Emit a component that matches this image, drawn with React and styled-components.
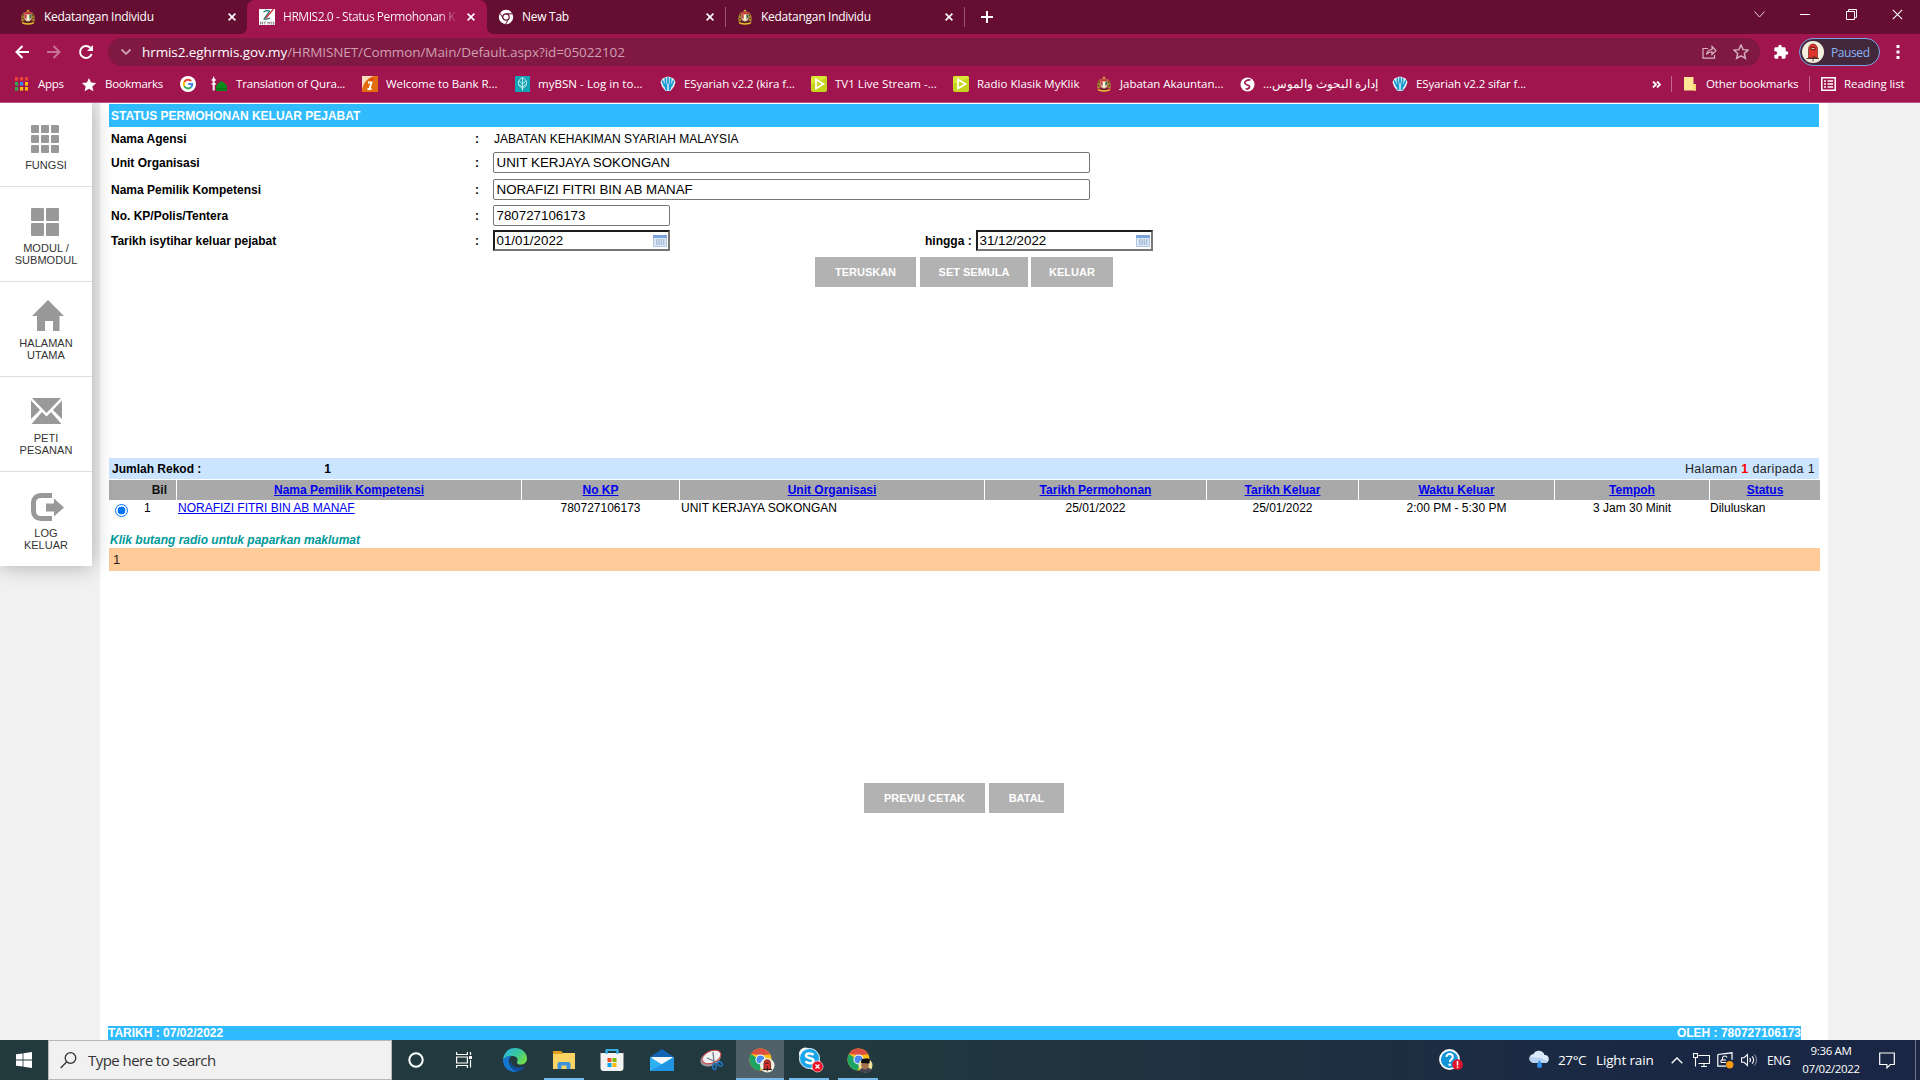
import React from "react";
import styled, { createGlobalStyle } from "styled-components";

const UI = `"Segoe UI", "Open Sans", "Noto Sans", sans-serif`;
const ARIAL = `Arial, "Liberation Sans", sans-serif`;

const Global = createGlobalStyle`
  html, body { margin: 0; padding: 0; overflow: hidden; background: #f1f1f1; }
  *, *::before, *::after { box-sizing: border-box; }
  svg { display: block; flex: none; }
`;

/* ---------- window ---------- */
const Screen = styled.div`
  width: 1920px;
  height: 1080px;
  display: flex;
  flex-direction: column;
  overflow: hidden;
  font-family: ${ARIAL};
`;

/* ---------- browser chrome ---------- */
const TabStrip = styled.div`
  height: 34px;
  flex: none;
  display: flex;
  background: #650e31;
  font-family: ${UI};
`;
const Tab = styled.div`
  width: ${(p) => p.$w}px;
  height: 34px;
  position: relative;
  display: flex;
  align-items: center;
  padding: 0 ${(p) => p.$pr}px 0 ${(p) => p.$pad}px;
  color: #fff;
  font-size: 12px;
  background: ${(p) => (p.$active ? "#a1154f" : "transparent")};
  border-radius: 8px 8px 0 0;
  ${(p) =>
    p.$active &&
    `
    &::before, &::after {
      content: "";
      position: absolute;
      bottom: 0;
      width: 6px;
      height: 6px;
    }
    &::before { left: -6px; background: radial-gradient(circle at 0 0, transparent 5.500px, #a1154f 6px); }
    &::after { right: -6px; background: radial-gradient(circle at 100% 0, transparent 5.500px, #a1154f 6px); }
  `}
`;
const TabTitle = styled.span`
  flex: 1;
  margin-left: 8px;
  line-height: 18px;
  white-space: nowrap;
  letter-spacing: ${(p) => p.$ls}px;
  ${(p) =>
    p.$fade &&
    "background: linear-gradient(90deg, #fff 90%, #b04a76 98%); -webkit-background-clip: text; background-clip: text; color: transparent;"}
`;
const TabClose = styled.span`
  width: 28px;
  flex: none;
  display: flex;
  justify-content: center;
`;
const TabDivider = styled.i`
  width: 1px;
  height: 20px;
  margin-top: 7px;
  background: #96576f;
`;
const NewTab = styled.div`
  width: 44px;
  display: flex;
  align-items: center;
  justify-content: center;
`;
const WindowButtons = styled.div`
  margin-left: auto;
  display: flex;
  height: 28px;
`;
const WinButton = styled.div`
  width: 46px;
  display: flex;
  align-items: center;
  justify-content: center;
`;

const Toolbar = styled.div`
  height: 36px;
  flex: none;
  display: flex;
  align-items: center;
  background: #a1154f;
  font-family: ${UI};
`;
const NavButton = styled.div`
  width: 32px;
  display: flex;
  justify-content: center;
  &:first-child { margin-left: 6px; }
`;
const Omnibox = styled.div`
  width: 1652px;
  height: 28px;
  margin-left: 6px;
  padding: 0 11px 0 12px;
  border-radius: 14px;
  background: #7f1942;
  display: flex;
  align-items: center;
`;
const Url = styled.span`
  flex: 1;
  margin-left: 10px;
  font-size: 13.5px;
  line-height: 20px;
  letter-spacing: -0.085px;
  color: #cf9fb2;
  b { font-weight: 400; color: #fff; }
`;
const OmniAction = styled.div`
  margin-left: ${(p) => p.$ml || 16}px;
`;
const ProfilePill = styled.div`
  width: 81px;
  height: 28px;
  margin-left: 10px;
  padding-left: 2px;
  border: 1px solid #7aa3e8;
  border-radius: 14px;
  background: #43283b;
  display: flex;
  align-items: center;
  color: #8ab4f8;
  font-size: 12px;
  span { margin-left: 7px; letter-spacing: -0.4px; }
`;

const BookmarkBar = styled.div`
  height: 33px;
  flex: none;
  display: flex;
  align-items: center;
  padding-bottom: 4px;
  background: #a1154f;
  border-bottom: 1px solid #b95580;
  color: #fff;
  font-family: ${UI};
  font-size: 11.5px;
`;
const Bookmark = styled.div`
  width: ${(p) => p.$w}px;
  height: 20px;
  display: flex;
  align-items: center;
  span {
    margin-left: ${(p) => p.$gap || 8}px;
    line-height: 18px;
    white-space: nowrap;
    letter-spacing: ${(p) => p.$ls ?? -0.3}px;
  }
`;
const BarDivider = styled.i`
  width: 1px;
  height: 16px;
  background: #c66790;
`;

/* ---------- page ---------- */
const Page = styled.div`
  height: 937px;
  flex: none;
  display: flex;
  background: #f1f1f1;
  overflow: hidden;
`;
const Side = styled.nav`
  width: 92px;
  height: 463px;
  flex: none;
  position: relative;
  z-index: 1;
  background: #fff;
  box-shadow: 0 0 20px rgba(0, 0, 0, 0.3);
`;
const SideItem = styled.div`
  height: ${(p) => p.$h}px;
  padding-top: ${(p) => p.$top}px;
  border-bottom: 1px solid ${(p) => (p.$last ? "#fff" : "#dedede")};
  display: flex;
  flex-direction: column;
  align-items: center;
  font-size: 11px;
  line-height: 12px;
  text-align: center;
  color: #333;
  svg { margin-left: ${(p) => p.$shift || 0}px; }
  span { margin-top: ${(p) => p.$gap}px; white-space: pre; letter-spacing: 0.03px; }
`;
const Panel = styled.main`
  width: 1728px;
  margin-left: 8px;
  padding: 1px 8px 0 9px;
  background: #fff;
  display: flex;
  flex-direction: column;
  font-size: 12px;
  color: #000;
`;
const TitleBar = styled.h1`
  width: 1710px;
  height: 23px;
  margin: 0;
  padding-left: 2px;
  background: #2fbbfe;
  color: #fff;
  font-size: 12px;
  font-weight: 700;
  line-height: 25px;
`;
const Field = styled.div`
  height: ${(p) => p.$h}px;
  display: flex;
  align-items: center;
  padding-left: 2px;
`;
const Label = styled.label`
  width: 364px;
  font-weight: 700;
`;
const Colon = styled.span`
  width: 18px;
  padding-right: 1px;
  font-weight: 700;
`;
const Plain = styled.span`
  margin-left: 1px;
  letter-spacing: 0.02px;
`;
const Box = styled.div`
  width: ${(p) => p.$w}px;
  height: 21px;
  padding: 0 2.5px;
  border: 1px solid #767676;
  border-radius: 2px;
  background: #fff;
  font-size: 13.33px;
  line-height: 20px;
`;
const DateBox = styled(Box)`
  display: flex;
  align-items: center;
  justify-content: space-between;
  padding: 0 1.5px;
  border: 2px solid;
  border-color: #1d1d1d #767676 #767676 #1d1d1d;
  border-radius: 0;
  line-height: 17px;
`;
const Until = styled.span`
  width: 51px;
  margin-left: 255px;
  font-weight: 700;
`;
const Actions = styled.div`
  display: flex;
  margin-left: ${(p) => p.$left}px;
  margin-top: ${(p) => p.$top}px;
`;
const Button = styled.button`
  width: ${(p) => p.$w}px;
  height: 30px;
  margin: 0 ${(p) => p.$mr || 0}px 0 0;
  padding: 0;
  border: 0;
  background: #b2b2b2;
  color: #fff;
  font: 700 11px/30px ${ARIAL};
`;
const Summary = styled.div`
  width: 1710px;
  height: 21px;
  margin-top: 171px;
  padding: 0 4px 0 3px;
  background: #cbe4ff;
  display: flex;
  align-items: center;
  font-size: 12px;
  b.count { margin-left: 123px; }
  b.page { color: #f00; }
`;
const PageInfo = styled.span`
  margin-left: auto;
  font-size: 12.5px;
  letter-spacing: 0.35px;
  color: #222;
`;
const Grid = styled.div`
  display: grid;
  grid-template-columns: 67px 344px 157px 304px 221px 151px 195px 154px 110px;
  column-gap: 1px;
`;
const HeadRow = styled(Grid)`
  margin-top: 1px;
`;
const Th = styled.div`
  height: 20px;
  background: #a9a9a9;
  text-align: center;
  font-weight: 700;
  line-height: 20px;
  color: ${(p) => (p.$plain ? "#111" : "#00e")};
  ${(p) => (p.$plain ? "text-align: right; padding-right: 9px;" : "text-decoration: underline;")}
`;
const Td = styled.div`
  height: 32px;
  padding: 1px 1px 0;
  line-height: 15px;
  text-align: ${(p) => (p.$left ? "left" : "center")};
  a { color: #00e; text-decoration: underline; }
`;
const StatusCell = styled(Td)`
  padding-left: 0;
  text-align: left;
`;
const IndexCell = styled(Td)`
  display: flex;
  padding-left: 6px;
  span { margin-left: 16px; }
`;
const Radio = styled.i`
  width: 13px;
  height: 13px;
  margin-top: 3px;
  border: 1px solid #0075ff;
  border-radius: 50%;
  background: radial-gradient(circle, #0075ff 0 3.6px, #fff 4.2px);
`;
const Hint = styled.div`
  height: 16px;
  padding-left: 1px;
  color: #009999;
  font-weight: 700;
  font-style: italic;
  line-height: 17px;
`;
const Pager = styled.div`
  height: 23px;
  padding-left: 4px;
  background: #ffcb99;
  color: #222;
  font-size: 13px;
  line-height: 23px;
`;
const PageFooter = styled.div`
  width: 1693px;
  height: 14px;
  margin: auto 0 0 -1px;
  background: #2fbbfe;
  color: #fff;
  font-weight: 700;
  line-height: 14px;
  display: flex;
  justify-content: space-between;
`;

/* ---------- taskbar ---------- */
const Taskbar = styled.div`
  height: 40px;
  flex: none;
  display: flex;
  background: linear-gradient(90deg, #22393e 0%, #22393f 45%, #1f3140 65%, #1a2844 85%, #1a2643 100%);
  color: #fff;
  font-family: ${UI};
`;
const Start = styled.div`
  width: 48px;
  display: flex;
  align-items: center;
  justify-content: center;
`;
const Search = styled.div`
  width: 344px;
  height: 40px;
  padding-left: 11px;
  border: 1px solid #b9b9b9;
  background: #f1f1f1;
  color: #333;
  display: flex;
  align-items: center;
  font-size: 15px;
  span { margin-left: 11px; letter-spacing: -0.55px; }
`;
const Task = styled.div`
  width: ${(p) => p.$w || 48}px;
  height: 40px;
  margin-left: ${(p) => p.$ml || 0}px;
  display: flex;
  align-items: center;
  justify-content: center;
  background: ${(p) => (p.$active ? "#50616a" : "transparent")};
  border-bottom: ${(p) => (p.$open ? "2px solid #76b9ed" : "0")};
  padding-top: ${(p) => (p.$open ? 2 : 0)}px;
  padding-left: ${(p) => p.$shift || 0}px;
`;
const Tray = styled.div`
  margin-left: auto;
  display: flex;
  align-items: center;
`;
const TraySlot = styled.div`
  width: ${(p) => p.$w}px;
  display: flex;
  justify-content: center;
`;
const TrayText = styled.div`
  width: ${(p) => p.$w}px;
  font-size: ${(p) => p.$size || 12}px;
  letter-spacing: ${(p) => p.$ls || 0}px;
  white-space: nowrap;
`;
const Clock = styled.div`
  width: 74px;
  font-size: 11.5px;
  line-height: 18px;
  letter-spacing: -0.35px;
  text-align: center;
`;
const ShowDesktop = styled.i`
  width: 5px;
  height: 40px;
  border-left: 1px solid #6b7487;
`;

/* ---------- icons ---------- */
const Crest = () => (
  <svg width="16" height="16" viewBox="0 0 16 16">
    <path d="M6 2.5h4L8 .4z" fill="#e8c32a" />
    <path d="M3.500 3C1.500 6 .8 9 1.500 12.500l3-.5-.5-4zM12.500 3c2 3 2.700 6 2 9.500l-3-.5.5-4z" fill="#a9822c" />
    <path d="M4.300 3.500h7.400v5c0 2-1.700 3.700-3.700 4.500-2-.8-3.700-2.500-3.700-4.500z" fill="#dccba6" />
    <path d="M4.300 3.500h7.400v1.700H4.300z" fill="#d3302f" />
    <path d="M4.800 5.500h1.700v4.500L4.800 8.500z" fill="#c33" />
    <path d="M9.500 5.500h1.700v3L9.500 10z" fill="#2f6f3c" />
    <path d="M7 6h2v5H7z" fill="#fbf6e2" />
    <path d="M1.500 12.500c3 2.300 10 2.300 13 0l-.9 2.200c-3.400 1.500-7.800 1.500-11.200 0z" fill="#e3c229" />
    <path d="M2.500 5l1.500 2M13.500 5L12 7M1.800 9l2 1M14.200 9l-2 1M5 13h6" stroke="#54351b" strokeWidth=".9" />
  </svg>
);
const Hrmis = () => (
  <svg width="16" height="16" viewBox="0 0 16 16">
    <path d="M0 0h16v16H0z" fill="#fff" />
    <path d="M4.500 3C7 1.500 9 1.500 10.500 2L5 10c2 .4 4 .1 6-1" fill="none" stroke="#1c7474" strokeWidth="1.200" />
    <path d="M14.500 0L6.500 9.500" stroke="#d4232c" strokeWidth="1.200" />
    <path d="M1.500 12.500v3M3.700 12.500v3M1.500 14h2.200M5.700 15.500v-2.600h1.500M9 15.500v-2.600l1 1.300 1-1.300v2.600M12.700 12.500v3M15 13h-.8v1h.8v1.300h-1.200" fill="none" stroke="#666" strokeWidth=".7" />
  </svg>
);
const ChromeMono = () => (
  <svg width="16" height="16" viewBox="0 0 16 16">
    <circle cx="8" cy="8" r="7.200" fill="#fff" />
    <circle cx="8" cy="8" r="3.200" fill="none" stroke="#650e31" strokeWidth="1.200" />
    <path d="M8 4.800h6.500M5.200 9.600L2 4.200M10.800 9.600L7.800 15" stroke="#650e31" strokeWidth="1" />
  </svg>
);
const Cross = ({ s = 8, w = 1.6 }) => (
  <svg width={s} height={s} viewBox="0 0 8 8">
    <path d="M.6.6l6.800 6.800M7.400.6L.6 7.400" stroke="#fff" strokeWidth={w} />
  </svg>
);
const Stroke = ({ w, h, d, c = "#fff", sw = 1, fill = "none" }) => (
  <svg width={w} height={h} viewBox={`0 0 ${w} ${h}`}>
    <path d={d} stroke={c} strokeWidth={sw} fill={fill} />
  </svg>
);
const Reload = () => (
  <svg width="16" height="16" viewBox="0 0 16 16">
    <path d="M13.700 10a6 6 0 1 1-1.300-6.200" fill="none" stroke="#fff" strokeWidth="2" />
    <path d="M15 1v6H9z" fill="#fff" />
  </svg>
);
const STAR = "M8 1l2.100 4.600 5 .5-3.800 3.300 1.100 4.900L8 11.800l-4.400 2.500 1.100-4.900L.9 6.100l5-.5z";
const Puzzle = () => (
  <svg width="16" height="16" viewBox="0 0 24 24">
    <path fill="#fff" d="M20.500 11H19V7c0-1.100-.9-2-2-2h-4V3.500a2.500 2.500 0 0 0-5 0V5H4c-1.100 0-2 .9-2 2v3.800h1.500c1.500 0 2.700 1.200 2.700 2.700S5 16.200 3.500 16.200H2V20c0 1.100.9 2 2 2h3.800v-1.500c0-1.500 1.200-2.700 2.700-2.700s2.700 1.200 2.700 2.700V22H17c1.100 0 2-.9 2-2v-4h1.500a2.500 2.500 0 0 0 0-5z" />
  </svg>
);
const Avatar = ({ s = 22 }) => (
  <svg width={s} height={s} viewBox="0 0 22 22">
    <circle cx="11" cy="11" r="11" fill="#f3eedd" />
    <path d="M6.500 17V8a4.500 5 0 0 1 9 0v9z" fill="#e0352d" stroke="#5b1714" strokeWidth=".6" />
    <ellipse cx="11" cy="7.500" rx="2.800" ry="2" fill="#8b1f1c" />
    <path d="M9.500 7.500h3" stroke="#f5e7c4" strokeWidth=".8" />
    <path d="M11 20.500v-5M4.500 17.500H17M12 15l3 3" stroke="#3c2a23" strokeWidth=".9" />
  </svg>
);
const Apps = () => (
  <svg width="13" height="14" viewBox="0 0 13 14">
    {["#ea4335", "#ea4335", "#ea4335", "#34a853", "#4285f4", "#fbbc05", "#34a853", "#fbbc05", "#fbbc05"].map((c, i) => (
      <rect key={i} x={(i % 3) * 5} y={Math.floor(i / 3) * 5} width="3.200" height="3.600" fill={c} />
    ))}
  </svg>
);
const Google = () => (
  <svg width="16" height="16" viewBox="0 0 16 16">
    <circle cx="8" cy="8" r="8" fill="#fff" />
    <g fill="none" strokeWidth="2">
      <path d="M11.200 5A4.300 4.300 0 0 0 4.300 5.900" stroke="#ea4335" />
      <path d="M4.300 5.900a4.300 4.300 0 0 0 0 4.200" stroke="#fbbc05" />
      <path d="M4.300 10.100a4.300 4.300 0 0 0 6.700 1.200" stroke="#34a853" />
      <path d="M11 11.300A4.300 4.300 0 0 0 12.300 8H8.200" stroke="#4285f4" />
    </g>
  </svg>
);
const Mosque = () => (
  <svg width="17" height="16" viewBox="0 0 17 16">
    <path d="M2.700 0l1 2.500v12H1.700v-12z" fill="#f1f1f1" />
    <path d="M.6 4h4.200M.6 8h4.200" stroke="#fff" strokeWidth="1.300" />
    <path d="M5 15v-4c0-2.500 3-4.500 5.500-6C13 6.500 16 8.500 16 11v4z" fill="#0c8a1c" />
    <path d="M5.500 13h10.500" stroke="#064f0d" strokeDasharray="1.500 1" />
  </svg>
);
const InfoI = () => (
  <svg width="16" height="16" viewBox="0 0 16 16">
    <path d="M0 0h16v16H0z" fill="#e36d0e" />
    <path d="M0 0h12C8 1 3 4 .8 11L0 13z" fill="#f7dfc0" />
    <path d="M6 6.500h3.500l-2 6.500M5.500 13h4" fill="none" stroke="#fff" strokeWidth="1.800" />
    <circle cx="10" cy="3.500" r="1.500" fill="#e33a0e" />
  </svg>
);
const Bsn = () => (
  <svg width="15" height="16" viewBox="0 0 15 16">
    <path d="M0 0h15v16H0z" fill="#12a3b4" />
    <path d="M7.500 1.500c5 2 6 8 0 11-6-3-5-9 0-11zM7.500 2v12.500M4 5l3.500 3L11 5M3.800 8.500l3.700 2.500 3.700-2.500" fill="none" stroke="#c9eef2" strokeWidth=".9" />
  </svg>
);
const Hands = () => (
  <svg width="16" height="16" viewBox="0 0 16 16">
    <path d="M5 1.500L8 .5l3 1 2.500 1L15.500 6l-1.500 4.500-3.500 4.500h-5L2 10.500.5 6l2-3.500z" fill="#e6f5fb" />
    <path d="M8 2v5M5.300 3l.5 6M10.700 3l-.5 6M2.500 5l2 5M13.500 5l-2 5" fill="none" stroke="#1d9bd1" strokeWidth="1.800" strokeLinecap="round" />
    <path d="M4 9l3.300-1v6.500H5.700zM12 9L8.700 8v6.500h1.600z" fill="#1d9bd1" />
  </svg>
);
const Klik = () => (
  <svg width="16" height="16" viewBox="0 0 16 16">
    <rect width="16" height="16" rx="2" fill="#c5d51d" />
    <path d="M0 8l16-6V2a2 2 0 0 0-2-2H2a2 2 0 0 0-2 2z" fill="#dbe534" />
    <path d="M5 3.500v9L12.500 8z" fill="none" stroke="#fff" strokeWidth="1.700" />
  </svg>
);
const Globe = () => (
  <svg width="15" height="15" viewBox="0 0 15 15">
    <circle cx="7.500" cy="7.500" r="7" fill="#fff" />
    <path d="M10.500 3C7 2.500 4 4.500 5 6.500s5 1 4.500 3.500-3 2-4 2" fill="none" stroke="#a1154f" strokeWidth="1.600" />
  </svg>
);
const Folder = () => (
  <svg width="12" height="14" viewBox="0 0 12 14">
    <path d="M0 0h9.500v7h2.500v6.500H0z" fill="#ffe594" />
    <path d="M9.500 7h2.500v6.500H9.500z" fill="#f9d873" />
  </svg>
);
const ReadingList = () => (
  <svg width="15" height="14" viewBox="0 0 15 14">
    <path d="M.8.8h13.400v12.400H.8z" fill="none" stroke="#fff" strokeWidth="1.500" />
    <path d="M3 4h2M3 7h2M3 10h2M6.500 4H12M6.500 7H12M6.500 10H12" stroke="#fff" strokeWidth="1.400" />
  </svg>
);
const Squares = ({ n }) => {
  const step = n === 3 ? 10 : 15;
  const size = n === 3 ? 8 : 13;
  return (
    <svg width="28" height="28" viewBox="0 0 28 28">
      {Array.from({ length: n * n }, (_, i) => (
        <rect key={i} x={(i % n) * step} y={Math.floor(i / n) * step} width={size} height={size} rx="1" fill="#999" />
      ))}
    </svg>
  );
};
const House = () => (
  <svg width="32" height="31" viewBox="0 0 32 31">
    <path d="M16 0l16 16h-4.500v15H21V21h-8v10H5V16H0z" fill="#999" />
  </svg>
);
const Envelope = () => (
  <svg width="31" height="26" viewBox="0 0 31 26">
    <path d="M1 0h29L15.500 15zM0 2.500L9 12 0 21zM31 2.500L22 12l9 9zM11 14l4.500 4.500L20 14l10.500 12H.5z" fill="#999" />
  </svg>
);
const Logout = () => (
  <svg width="33" height="28" viewBox="0 0 33 28">
    <path d="M21 2.500H9.500a7 7 0 0 0-7 7v9a7 7 0 0 0 7 7H21" fill="none" stroke="#999" strokeWidth="5" />
    <path d="M15 10.500h8V5.500l10 9-10 9v-5h-8z" fill="#999" />
  </svg>
);
const Calendar = () => (
  <svg width="14" height="12" viewBox="0 0 14 12">
    <path d="M.5.500h13v11H.5z" fill="#dce8f8" stroke="#b5c6e0" />
    <path d="M0 0h14v3H0z" fill="#7ba3dc" />
    <path d="M3 5h9M3 7h9M3 9h9" stroke="#7f95b8" strokeDasharray="1.500 .8" />
  </svg>
);
const Windows = () => (
  <svg width="16" height="16" viewBox="0 0 16 16">
    <path d="M0 2.300L6.600 1.400V7.600H0zM7.400 1.300L16 0V7.600H7.400zM0 8.400h6.600v6.200L0 13.700zM7.400 8.400H16V16l-8.600-1.300z" fill="#fff" />
  </svg>
);
const Magnifier = () => (
  <svg width="17" height="17" viewBox="0 0 17 17">
    <circle cx="10.500" cy="6" r="5.300" fill="none" stroke="#333" strokeWidth="1.300" />
    <path d="M6.800 9.800L.7 16" stroke="#333" strokeWidth="1.300" />
  </svg>
);
const Cortana = () => (
  <svg width="16" height="16" viewBox="0 0 16 16">
    <circle cx="8" cy="8" r="6.700" fill="none" stroke="#fff" strokeWidth="2" />
  </svg>
);
const TaskView = () => (
  <svg width="17" height="16" viewBox="0 0 17 16">
    <path d="M.6 0v2.500h10.800V0M.6 16v-2.500h10.800V16M.6 5h10.800v6H.6zM14.500 0v3M14.500 8v7.500" fill="none" stroke="#fff" strokeWidth="1.200" />
    <path d="M13 4h3v3h-3z" fill="#fff" />
  </svg>
);
const Edge = () => (
  <svg width="24" height="24" viewBox="0 0 24 24">
    <defs>
      <linearGradient id="eg" x1="0" y1="0" x2="1" y2=".6">
        <stop offset="0" stopColor="#2bb5e8" />
        <stop offset=".6" stopColor="#38c99b" />
        <stop offset="1" stopColor="#6fdc4d" />
      </linearGradient>
    </defs>
    <path d="M0 12C1 4 6 0 12 0c7 0 12 5 12 10.500 0 4-3 6-6.500 6-3 0-4-1.500-3.300-3 1.500-3-1.200-5.500-4.700-5.500C5 8 1.500 10 0 12z" fill="url(#eg)" />
    <path d="M0 12c1.500-3 5-4.600 8.500-4.300C6 9.500 5.500 12 6 15c.8 4.500 5 7.500 9 8.500C7 25.500 0 20 0 12z" fill="#1477cf" />
    <path d="M8.500 12c-1 6 4.500 9.500 13 6.500-2 3.300-4.500 4.700-7 5C9 22.500 5.500 17 8.500 12z" fill="#0d4f9c" />
  </svg>
);
const Explorer = () => (
  <svg width="22" height="18" viewBox="0 0 22 18">
    <path d="M0 0h8l2 2h12V5H0z" fill="#e0a01a" />
    <path d="M0 3h9l1.500-1H22v16H0z" fill="#fbd461" />
    <path d="M4.500 18v-5a2 2 0 0 1 2-2h9a2 2 0 0 1 2 2v5h-4v-3.500H8.500V18z" fill="#3f92dd" />
  </svg>
);
const Store = () => (
  <svg width="24" height="24" viewBox="0 0 24 24">
    <path d="M6.500 7V2h11v5" fill="none" stroke="#36aee6" strokeWidth="2" />
    <path d="M.5 5h23v15a3 3 0 0 1-3 3h-17a3 3 0 0 1-3-3z" fill="#f2f2f2" />
    <path d="M6.500 6V3M17.500 6V3" stroke="#36aee6" strokeWidth="2" />
    <path d="M7.500 10h4v4h-4z" fill="#f25022" />
    <path d="M12.500 10h4v4h-4z" fill="#7fba00" />
    <path d="M7.500 15h4v4h-4z" fill="#00a4ef" />
    <path d="M12.500 15h4v4h-4z" fill="#ffb900" />
  </svg>
);
const Mail = () => (
  <svg width="24" height="22" viewBox="0 0 24 22">
    <path d="M0 8L12 0l12 8z" fill="#1365b3" />
    <path d="M1 8h22l-5 8H6z" fill="#f4f8fc" />
    <path d="M0 8l12 7.500L24 8v14H0z" fill="#2fb0f2" />
    <path d="M0 22L24 8v14z" fill="#2095e3" />
  </svg>
);
const Snip = () => (
  <svg width="24" height="22" viewBox="0 0 24 22">
    <ellipse cx="10.500" cy="10" rx="10.500" ry="7" transform="rotate(-22 10.500 10)" fill="#9a9a9f" />
    <ellipse cx="11.500" cy="8" rx="10" ry="6" transform="rotate(-24 11.500 8)" fill="#f1f1f3" stroke="#cf3e3e" />
    <path d="M13 3l1 10M7 9l9 4" stroke="#707a86" strokeWidth="1.300" />
    <ellipse cx="14.500" cy="17.500" rx="1.800" ry="3" fill="none" stroke="#1f73b9" strokeWidth="1.600" />
    <ellipse cx="20" cy="15" rx="2.600" ry="1.800" transform="rotate(35 20 15)" fill="none" stroke="#1f73b9" strokeWidth="1.600" />
  </svg>
);
const ChromeTask = ({ person }) => (
  <svg width="26" height="26" viewBox="0 0 26 26">
    <circle cx="11.500" cy="12.500" r="11" fill="#fbc116" />
    <path d="M11.500 8L2 7a11 11 0 0 1 19.200.5L11.500 8z" fill="#dd4f43" />
    <path d="M2 7a11 11 0 0 0 8.500 16.500l4-8z" fill="#1da362" />
    <circle cx="11.500" cy="12.500" r="5" fill="#fff" />
    <circle cx="11.500" cy="12.500" r="4" fill="#4b8bf4" />
    {person ? (
      <g>
        <circle cx="18.500" cy="18.500" r="7" fill="#efe49a" />
        <path d="M12.500 24c1-3 3-4 6-4s5 1 6 4c-3.500 2.300-8.500 2.300-12 0z" fill="#41444d" />
        <ellipse cx="18" cy="18" rx="3.800" ry="4.500" fill="#a3714f" />
        <path d="M14 16l.5-4 6-.8 2.500 1.300-.6 4z" fill="#0e0f12" />
      </g>
    ) : (
      <g transform="translate(11 11) scale(.66)">
        <circle cx="11" cy="11" r="11" fill="#f3eedd" />
        <path d="M6 17V8.500a5 6 0 0 1 10 0V17z" fill="#d8302a" stroke="#3d1210" />
        <path d="M8.500 8h5M4 17.500h14M11 12v8" stroke="#2c1b18" strokeWidth="1.500" />
      </g>
    )}
  </svg>
);
const Skype = () => (
  <svg width="26" height="26" viewBox="0 0 26 26">
    <circle cx="7.500" cy="7" r="6.500" fill="#fff" />
    <circle cx="16" cy="16.500" r="6.500" fill="#fff" />
    <circle cx="11.500" cy="11.500" r="10" fill="#1ba5ea" stroke="#e8f7fe" />
    <path d="M15.500 7.800c-2-2-7.500-2-7.500.9s7.500 1.700 7.500 5-6 3.300-8 .6" fill="none" stroke="#fff" strokeWidth="2.500" />
    <circle cx="19.500" cy="19.500" r="5.500" fill="#e81123" stroke="#fff" strokeWidth=".6" />
    <path d="M17.500 17.500l4 4M21.500 17.500l-4 4" stroke="#fff" strokeWidth="1.300" />
  </svg>
);
const Help = () => (
  <svg width="24" height="22" viewBox="0 0 24 22">
    <circle cx="10.500" cy="10.500" r="9.500" fill="#1295d8" stroke="#fff" strokeWidth="1.800" />
    <path d="M7.500 8c0-4 6.300-3.800 6.300 0 0 2.500-3 2.500-3 5" fill="none" stroke="#fff" strokeWidth="2" />
    <circle cx="10.700" cy="15.800" r="1.300" fill="#fff" />
    <circle cx="18.500" cy="15.500" r="5.300" fill="#e0142a" />
    <path d="M18.500 12v4.500M18.500 17.500v1.500" stroke="#fff" strokeWidth="1.500" />
  </svg>
);
const Weather = () => (
  <svg width="21" height="20" viewBox="0 0 21 20">
    <path d="M5 13a4.500 4.500 0 0 1-.5-9A6 6 0 0 1 15.500 5a4 4 0 0 1 .5 8z" fill="#dbe9f9" />
    <path d="M5 13a4.500 4.500 0 0 1-3.500-7c2 2.500 9 1 12 2.500 2.500 1 4 2 5 3-1 1-1.500 1.500-2.500 1.500z" fill="#b5d0f0" />
    <path d="M10.500 10c1.700 3 2.500 4 2.500 5.500a2.500 2.500 0 0 1-5 0c0-1.500.8-2.500 2.500-5.500z" fill="#2f8de8" />
  </svg>
);
const Network = () => (
  <svg width="17" height="15" viewBox="0 0 17 15">
    <path d="M5.500 2.500h11v8h-11M8 13.500h6M11 10.500v3M.5.500h4v4h-4zM2.500 4.500v9" fill="none" stroke="#fff" strokeWidth="1.100" />
  </svg>
);
const Sync = () => (
  <svg width="17" height="17" viewBox="0 0 17 17">
    <path d="M.8 2.500L15 .8v7M.8 2.500v11.700H9" fill="none" stroke="#fff" strokeWidth="1.200" />
    <path d="M4 10.500V8.500l1.500-1V5.500c1-2 4-2 4.500 0M4 10.500h5M5 8h4" fill="none" stroke="#fff" strokeWidth="1.100" />
    <circle cx="12.700" cy="12.700" r="3.700" fill="#f79a12" />
  </svg>
);
const Speaker = () => (
  <svg width="17" height="14" viewBox="0 0 17 14">
    <path d="M.6 4.700h2.400L6.500 1.500v11L3 9.300H.6zM8.700 5c1 1.200 1 2.800 0 4M11 3.300c2 2.200 2 5.200 0 7.400" fill="none" stroke="#fff" strokeWidth="1.100" />
    <path d="M13.300 1.500c3 3.300 3 7.700 0 11" fill="none" stroke="#8b94a8" strokeWidth="1.100" />
  </svg>
);

const TABS = [
  { w: 247, pad: 20, pr: 1, icon: <Crest />, title: "Kedatangan Individu" },
  { w: 240, pad: 12, pr: 2, icon: <Hrmis />, title: "HRMIS2.0 - Status Permohonan K", ls: -0.45, active: true },
  { w: 238, pad: 11, pr: 1, icon: <ChromeMono />, title: "New Tab", divider: true },
  { w: 238, pad: 11, pr: 1, icon: <Crest />, title: "Kedatangan Individu", divider: true },
];

const BOOKMARKS = [
  { w: 66, icon: <Apps />, t: "Apps", gap: 10 },
  { w: 99, icon: <Stroke w={15} h={15} d={STAR} fill="#fff" c="none" />, t: "Bookmarks", gap: 9 },
  { w: 31, icon: <Google /> },
  { w: 151, icon: <Mosque />, t: "Translation of Qura...", ls: -0.18 },
  { w: 153, icon: <InfoI />, t: "Welcome to Bank R...", ls: -0.06 },
  { w: 145, icon: <Bsn />, t: "myBSN - Log in to...", ls: 0.05 },
  { w: 151, icon: <Hands />, t: "ESyariah v2.2 (kira f...", ls: -0.1 },
  { w: 142, icon: <Klik />, t: "TV1 Live Stream -...", ls: 0.03 },
  { w: 143, icon: <Klik />, t: "Radio Klasik MyKlik", ls: 0.02 },
  { w: 144, icon: <Crest />, t: "Jabatan Akauntan...", ls: -0.02 },
  { w: 152, icon: <Globe />, t: "إدارة البحوث والموس...", ls: -0.4, rtl: true },
  { w: 260, icon: <Hands />, t: "ESyariah v2.2 sifar f...", ls: -0.13 },
];

const HEADS = ["Nama Pemilik Kompetensi", "No KP", "Unit Organisasi", "Tarikh Permohonan", "Tarikh Keluar", "Waktu Keluar", "Tempoh", "Status"];

export default function App() {
  return (
    <Screen>
      <Global />
      <TabStrip>
        {TABS.map((t, i) => (
          <React.Fragment key={i}>
            <Tab $w={t.w} $pad={t.pad} $pr={t.pr} $active={t.active}>
              {t.icon}
              <TabTitle $fade={t.active} $ls={t.ls ?? -0.27}>{t.title}</TabTitle>
              <TabClose><Cross /></TabClose>
            </Tab>
            {t.divider && <TabDivider />}
          </React.Fragment>
        ))}
        <NewTab><Stroke w={12} h={12} d="M6 0v12M0 6h12" sw={2} /></NewTab>
        <WindowButtons>
          <WinButton><Stroke w={11} h={7} d="M.5.5l5 5.500 5-5.500" c="#e6d0d9" /></WinButton>
          <WinButton><Stroke w={10} h={1} d="M0 .5h10" /></WinButton>
          <WinButton><Stroke w={11} h={11} d="M.5 2.500h8v8h-8zM2.500 2.500v-2h8v8h-2" /></WinButton>
          <WinButton><Cross s={11} w={0.8} /></WinButton>
        </WindowButtons>
      </TabStrip>

      <Toolbar>
        <NavButton><Stroke w={14} h={14} d="M14 7H2M7.500 1L1.500 7l6 6" sw={2} /></NavButton>
        <NavButton><Stroke w={14} h={14} d="M0 7h12M6.500 1l6 6-6 6" sw={2} c="#c77395" /></NavButton>
        <NavButton><Reload /></NavButton>
        <Omnibox>
          <Stroke w={12} h={8} d="M1.500 1.500L6 6l4.500-4.500" sw={1.8} c="#c9a0b0" />
          <Url><b>hrmis2.eghrmis.gov.my</b>/HRMISNET/Common/Main/Default.aspx?id=05022102</Url>
          <OmniAction>
            <Stroke w={15} h={14} d="M6 3.500H1v9.700h11.500V10M4.500 9.500C5 6 7 4.700 10 4.500V1.500l4 4-4 4V6.800C7.500 6.800 6 7.500 4.500 9.500z" sw={1.2} c="#d9b3c2" />
          </OmniAction>
          <OmniAction><Stroke w={16} h={16} d={STAR} sw={1.4} c="#d9b3c2" /></OmniAction>
        </Omnibox>
        <OmniAction $ml={13}><Puzzle /></OmniAction>
        <ProfilePill><Avatar /><span>Paused</span></ProfilePill>
        <OmniAction $ml={16}><Stroke w={4} h={14} d="M.5 0h3v3h-3zM.5 5.500h3v3h-3zM.5 11h3v3h-3z" fill="#fff" c="none" /></OmniAction>
      </Toolbar>

      <BookmarkBar>
        <Bookmark $w={15} />
        {BOOKMARKS.map((b, i) => (
          <Bookmark key={i} $w={b.w} $gap={b.gap} $ls={b.ls}>
            {b.icon}
            {b.t && <span dir={b.rtl ? "rtl" : "ltr"}>{b.t}</span>}
          </Bookmark>
        ))}
        <Bookmark $w={19}><Stroke w={9} h={7} d="M1 .5L4 3.500 1 6.500M5 .5l3 3-3 3" sw={1.8} /></Bookmark>
        <BarDivider />
        <Bookmark $w={12} />
        <Bookmark $w={125} $gap={10} $ls={-0.13}><Folder /><span>Other bookmarks</span></Bookmark>
        <BarDivider />
        <Bookmark $w={11} />
        <Bookmark $w={90} $ls={-0.08}><ReadingList /><span>Reading list</span></Bookmark>
      </BookmarkBar>

      <Page>
        <Side>
          <SideItem $h={84} $top={22} $gap={6} $shift={-2}><Squares n={3} /><span>FUNGSI</span></SideItem>
          <SideItem $h={95} $top={21} $gap={6} $shift={-2}><Squares n={2} /><span>{"MODUL /\nSUBMODUL"}</span></SideItem>
          <SideItem $h={95} $top={18} $gap={6} $shift={3}><House /><span>{"HALAMAN\nUTAMA"}</span></SideItem>
          <SideItem $h={95} $top={21} $gap={8}><Envelope /><span>{"PETI\nPESANAN"}</span></SideItem>
          <SideItem $h={94} $top={21} $gap={6} $shift={3} $last><Logout /><span>{"LOG\nKELUAR"}</span></SideItem>
        </Side>

        <Panel>
          <TitleBar>STATUS PERMOHONAN KELUAR PEJABAT</TitleBar>
          <Field $h={23}><Label>Nama Agensi</Label><Colon>:</Colon><Plain>JABATAN KEHAKIMAN SYARIAH MALAYSIA</Plain></Field>
          <Field $h={25}><Label>Unit Organisasi</Label><Colon>:</Colon><Box $w={597}>UNIT KERJAYA SOKONGAN</Box></Field>
          <Field $h={29}><Label>Nama Pemilik Kompetensi</Label><Colon>:</Colon><Box $w={597}>NORAFIZI FITRI BIN AB MANAF</Box></Field>
          <Field $h={23}><Label>No. KP/Polis/Tentera</Label><Colon>:</Colon><Box $w={177}>780727106173</Box></Field>
          <Field $h={27}>
            <Label>Tarikh isytihar keluar pejabat</Label><Colon>:</Colon>
            <DateBox $w={177}><span>01/01/2022</span><Calendar /></DateBox>
            <Until>hingga :</Until>
            <DateBox $w={177}><span>31/12/2022</span><Calendar /></DateBox>
          </Field>
          <Actions $left={706} $top={3}>
            <Button $w={101} $mr={4}>TERUSKAN</Button>
            <Button $w={108} $mr={3}>SET SEMULA</Button>
            <Button $w={82}>KELUAR</Button>
          </Actions>

          <Summary>
            <b>Jumlah Rekod :</b>
            <b className="count">1</b>
            <PageInfo>Halaman <b className="page">1</b> daripada 1</PageInfo>
          </Summary>
          <HeadRow>
            <Th $plain>Bil</Th>
            {HEADS.map((h) => <Th key={h}>{h}</Th>)}
          </HeadRow>
          <Grid>
            <IndexCell><Radio /><span>1</span></IndexCell>
            <Td $left><a>NORAFIZI FITRI BIN AB MANAF</a></Td>
            <Td>780727106173</Td>
            <Td $left>UNIT KERJAYA SOKONGAN</Td>
            <Td>25/01/2022</Td>
            <Td>25/01/2022</Td>
            <Td>2:00 PM - 5:30 PM</Td>
            <Td>3 Jam 30 Minit</Td>
            <StatusCell>Diluluskan</StatusCell>
          </Grid>
          <Hint>Klik butang radio untuk paparkan maklumat</Hint>
          <Pager>1</Pager>
          <Actions $left={755} $top={212}>
            <Button $w={121} $mr={4}>PREVIU CETAK</Button>
            <Button $w={75}>BATAL</Button>
          </Actions>
          <PageFooter><span>TARIKH : 07/02/2022</span><span>OLEH : 780727106173</span></PageFooter>
        </Panel>
      </Page>

      <Taskbar>
        <Start><Windows /></Start>
        <Search><Magnifier /><span>Type here to search</span></Search>
        <Task><Cortana /></Task>
        <Task><TaskView /></Task>
        <Task $ml={3}><Edge /></Task>
        <Task $w={40} $ml={5} $open><Explorer /></Task>
        <Task $ml={4}><Store /></Task>
        <Task $ml={2}><Mail /></Task>
        <Task $ml={2}><Snip /></Task>
        <Task $open $active $shift={4}><ChromeTask /></Task>
        <Task $w={40} $ml={5} $open $shift={3}><Skype /></Task>
        <Task $w={40} $ml={9} $open $shift={3}><ChromeTask person /></Task>
        <Tray>
          <TraySlot $w={24}><Help /></TraySlot>
          <TraySlot $w={66} />
          <TraySlot $w={21}><Weather /></TraySlot>
          <TraySlot $w={8} />
          <TrayText $w={38} $size={13.5} $ls={-0.4}>27°C</TrayText>
          <TrayText $w={69} $size={13.5} $ls={-0.15}>Light rain</TrayText>
          <TraySlot $w={24}><Stroke w={12} h={7} d="M.7 6.300L6 1l5.300 5.300" sw={1.3} /></TraySlot>
          <TraySlot $w={24}><Network /></TraySlot>
          <TraySlot $w={24}><Sync /></TraySlot>
          <TraySlot $w={24}><Speaker /></TraySlot>
          <TraySlot $w={6} />
          <TrayText $w={27} $size={12} $ls={-0.4}>ENG</TrayText>
          <Clock>9:36 AM<br />07/02/2022</Clock>
          <TraySlot $w={38}><Stroke w={16} h={17} d="M.7 1h14.600v11.500h-4L8 15.800 7.900 12.500H.7z" sw={1.2} /></TraySlot>
          <TraySlot $w={9} />
          <ShowDesktop />
        </Tray>
      </Taskbar>
    </Screen>
  );
}
